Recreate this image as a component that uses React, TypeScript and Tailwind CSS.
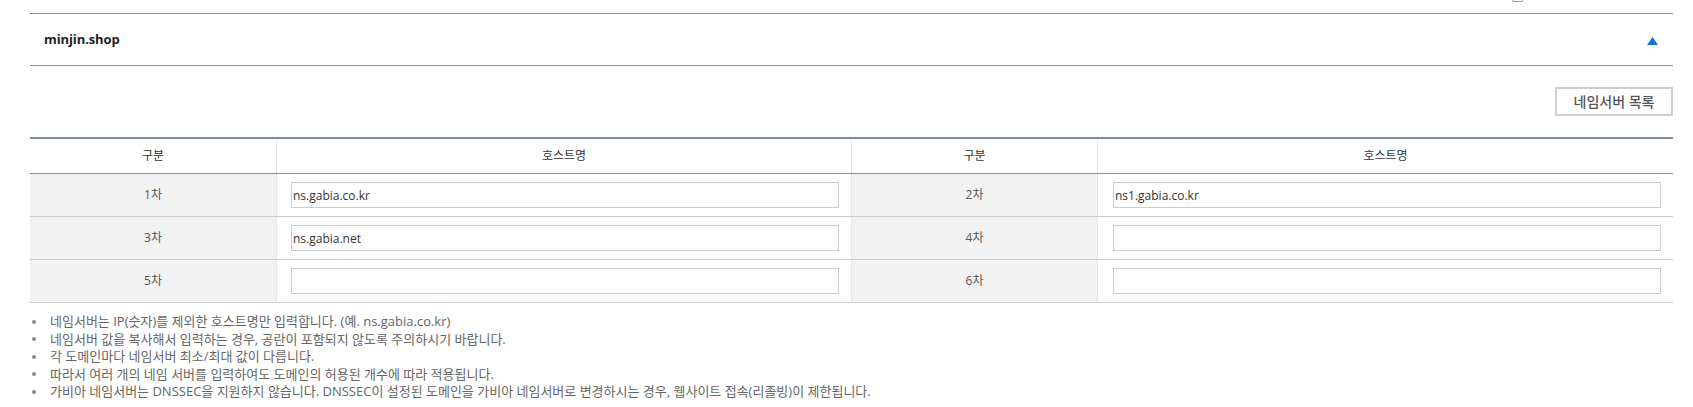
import { useState } from "react";

type Row = { a: string; av: string; b: string; bv: string };

const initialRows: Row[] = [
  { a: "1차", av: "ns.gabia.co.kr", b: "2차", bv: "ns1.gabia.co.kr" },
  { a: "3차", av: "ns.gabia.net", b: "4차", bv: "" },
  { a: "5차", av: "", b: "6차", bv: "" },
];

const notes = [
  "네임서버는 IP(숫자)를 제외한 호스트명만 입력합니다. (예. ns.gabia.co.kr)",
  "네임서버 값을 복사해서 입력하는 경우, 공란이 포함되지 않도록 주의하시기 바랍니다.",
  "각 도메인마다 네임서버 최소/최대 값이 다릅니다.",
  "따라서 여러 개의 네임 서버를 입력하여도 도메인의 허용된 개수에 따라 적용됩니다.",
  "가비아 네임서버는 DNSSEC을 지원하지 않습니다. DNSSEC이 설정된 도메인을 가비아 네임서버로 변경하시는 경우, 웹사이트 접속(리졸빙)이 제한됩니다.",
];

function HostInput({ value, onChange }: { value: string; onChange: (v: string) => void }) {
  return (
    <input
      value={value}
      onChange={(e) => onChange(e.target.value)}
      className="w-full h-[26px] border border-[#cccccc] bg-white px-[1px] text-[12px] text-[#333] outline-none"
    />
  );
}

export default function App() {
  const [open, setOpen] = useState(true);
  const [rows, setRows] = useState(initialRows);

  const update = (i: number, key: "av" | "bv", v: string) =>
    setRows((rs) => rs.map((r, j) => (j === i ? { ...r, [key]: v } : r)));

  return (
    <div className="w-[1693px] h-[407px] overflow-hidden bg-white font-['Open_Sans','Noto_Sans_CJK_KR',sans-serif]">
      {/* leftover of the block above */}
      <div className="h-[13px] flex justify-end pr-[170px]">
        <div className="w-[11px] h-[2px] border border-t-0 border-[#9a9a9a] rounded-b-[2px]" />
      </div>

      <div className="ml-[30px] mr-[20px]">
        {/* domain header */}
        <div className="h-[53px] border-y border-[#868e95] flex items-center justify-between pl-[14px] pr-[15px]">
          <span className="text-[13px] font-bold text-[#222] tracking-[-0.1px]">minjin.shop</span>
          <button onClick={() => setOpen(!open)} className="w-[11px] h-[8px] mt-[2px]">
            <svg viewBox="0 0 11 8" className="w-[11px] h-[8px]">
              <polygon points={open ? "5.5,0 11,8 0,8" : "0,0 11,0 5.5,8"} fill="#0a78d2" />
            </svg>
          </button>
        </div>

        {open && (
          <>
            <div className="flex justify-end pt-[21px] pb-[21px]">
              <button className="w-[118px] h-[29px] border-2 border-[#cfcfcf] bg-white text-[14px] font-medium text-[#555]">
                네임서버 목록
              </button>
            </div>

            {/* nameserver table */}
            <div className="border-t-2 border-[#7a8c9a]">
              <div className="grid grid-cols-[246px_575px_246px_576px] h-[35px] border-b border-[#7e8f9c] text-[12px] text-[#333]">
                <div className="flex items-center justify-center">구분</div>
                <div className="flex items-center justify-center border-l border-[#e6e6e6]">호스트명</div>
                <div className="flex items-center justify-center border-l border-[#e6e6e6]">구분</div>
                <div className="flex items-center justify-center border-l border-[#e6e6e6]">호스트명</div>
              </div>
              {rows.map((r, i) => (
                <div
                  key={r.a}
                  className="grid grid-cols-[246px_575px_246px_576px] h-[43px] border-b border-[#cdcdcd] text-[12px] text-[#555]"
                >
                  <div className="flex items-center justify-center bg-[#f2f2f2]">{r.a}</div>
                  <div className="flex items-center pl-[14px] pr-[12px] border-l border-[#e6e6e6]">
                    <HostInput value={r.av} onChange={(v) => update(i, "av", v)} />
                  </div>
                  <div className="flex items-center justify-center bg-[#f2f2f2] border-l border-[#e6e6e6]">{r.b}</div>
                  <div className="flex items-center pl-[15px] pr-[12px] border-l border-[#e6e6e6]">
                    <HostInput value={r.bv} onChange={(v) => update(i, "bv", v)} />
                  </div>
                </div>
              ))}
            </div>

            {/* notes */}
            <ul className="mt-[10px] text-[13px] leading-[17.5px] text-[#666]">
              {notes.map((n) => (
                <li key={n} className="flex items-center">
                  <span className="w-[4px] h-[4px] rounded-full bg-[#8a8a8a] ml-[2px] mr-[14px]" />
                  {n}
                </li>
              ))}
            </ul>
          </>
        )}
      </div>
    </div>
  );
}
